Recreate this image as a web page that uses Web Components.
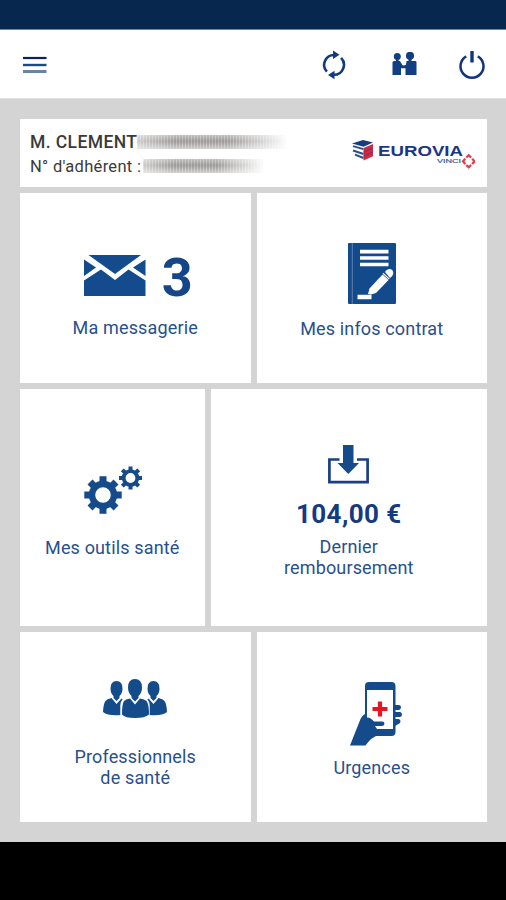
<!DOCTYPE html>
<html lang="fr">
<head>
<meta charset="utf-8">
<title>Espace adhérent</title>
<style>
html,body{margin:0;height:100%;background:#d4d4d4;font-family:Roboto,"Liberation Sans",sans-serif;color:#174080}
</style>
</head>
<body>
<health-app></health-app>
<script>
const define = (name, html) => customElements.define(name, class extends HTMLElement {
  constructor() {
    super();
    const t = document.createElement('template');
    t.innerHTML = html;
    this.attachShadow({mode: 'open'}).append(t.content.cloneNode(true));
  }
});

define('app-bar', `
<style>
:host{display:flex;align-items:center;height:69px;box-sizing:border-box;padding:2px 20px 0 23px;background:#fff;border-bottom:1px solid #e2e2e2}
svg{display:block;flex:none}
.space{flex:1}
.sync{margin-right:46px}.people{margin-right:41px}
</style>
<svg width="24" height="18" viewBox="0 0 24 18"><path d="M0 2h23.500" stroke="#0b1f66" stroke-width="2.200"/><path d="M0 9h23.500" stroke="#174a86" stroke-width="2.400"/><path d="M0 15.500h23.500" stroke="#6b82a8" stroke-width="3"/></svg>
<span class="space"></span>
<svg class="sync" width="24" height="30" viewBox="0 0 24 30"><g fill="none" stroke="#123a80" stroke-width="2.600"><path d="M4.900 21.700A9.900 9.900 0 0 1 12 5h2"/><path d="M19.100 7.900A9.900 9.900 0 0 1 12 24.700h-2"/></g><path d="M11 .5l6.500 4.200L11 9zM12.500 20.700L6 25l6.500 4.300z" fill="#123a80"/></svg>
<svg class="people" width="25" height="26" viewBox="0 0 25 26"><g fill="#123f82"><circle cx="5.300" cy="4.500" r="3.500"/><circle cx="18" cy="3.800" r="4.100"/><path d="M4 7h2.600v3H4zM16.500 7h3v4h-3zM.5 10.500q0-1.500 1.500-1.500h6l2.500 4.300 2.300.5v2.400H9V23H.5zM14.500 9h8.700q1.300 0 1.300 1.300V23H13.500v-6.700l-2-.2v-2.300l2.500-1z"/></g></svg>
<svg width="28" height="30" viewBox="0 0 28 30"><path d="M8.200 6.300a11.500 11.500 0 1 0 11.600 0" fill="none" stroke="#12347e" stroke-width="2.500"/><path d="M14 1v11.500" stroke="#12347e" stroke-width="3.400"/></svg>
`);

define('brand-logo', `
<style>:host{display:block}svg{display:block}</style>
<svg width="124" height="30" viewBox="0 0 124 30">
<path d="M1 4.500L12 1l10 2.500-9.500 4.200z" fill="#173b80"/>
<path d="M2 7.200l10.500 3M2 11.500l10.500 3.500M4 15.600l8.500 3.400" stroke="#2b4d8c" stroke-width="1.900"/>
<path d="M12.500 9L22 4.900v12.300l-9.500 4.300z" fill="#d3283f"/>
<path d="M12.500 13L22 9M12.500 17.200l9.500-4.300" stroke="#5a3568" stroke-width=".8"/>
<text x="27" y="17" textLength="85" lengthAdjust="spacingAndGlyphs" font-family="Liberation Sans,sans-serif" font-weight="700" font-size="14" fill="#1b3684">EUROVIA</text>
<text x="86" y="24" textLength="24" lengthAdjust="spacingAndGlyphs" font-family="Liberation Sans,sans-serif" font-size="5.500" fill="#4a5f96" stroke="#4a5f96" stroke-width=".2">VINCI</text>
<path d="M115.300 18.500l2.400-2.300 2.400 2.300M121.200 19.800l2.300 2.500-2.300 2.600M120.100 26l-2.400 2.300-2.400-2.300M114.300 24.900l-2.300-2.600 2.300-2.500" fill="none" stroke="#e23a47" stroke-width="2.200"/>
</svg>
`);

define('member-card', `
<style>
:host{display:flex;justify-content:space-between;box-sizing:border-box;height:68px;background:#fff;padding:11px 12px 0 10px;color:#3a3a3a}
.row{display:flex;align-items:center;height:24px;white-space:nowrap}
.name{font-size:17.500px;font-weight:500;letter-spacing:.4px}
.num{font-size:16.500px;letter-spacing:.3px}
.smear{height:14px;background:repeating-linear-gradient(90deg,rgba(255,255,255,.28) 0 1px,transparent 1px 3px),linear-gradient(180deg,rgba(120,117,115,.45),rgba(130,127,125,.8) 45%,rgba(150,148,146,.45));-webkit-mask:linear-gradient(90deg,rgba(0,0,0,.5),#000 25%,#000 60%,transparent);mask:linear-gradient(90deg,rgba(0,0,0,.5),#000 25%,#000 60%,transparent)}
.s1{width:151px}.s2{width:122px;margin-left:2px}
brand-logo{margin-top:9px}
</style>
<div>
<div class="row name"><slot name="name"></slot><span class="smear s1"></span></div>
<div class="row num"><slot name="number"></slot><span class="smear s2"></span></div>
</div>
<brand-logo></brand-logo>
`);

define('menu-tile', `
<style>
:host{display:flex;flex-direction:column;align-items:center;box-sizing:border-box;background:#fff;color:#28508c;padding-top:var(--top);min-width:0}
.head{display:flex;align-items:flex-start;height:var(--head)}
.label{font-size:18px;line-height:21px;text-align:center;letter-spacing:.15px;white-space:nowrap}
</style>
<div class="head"><slot name="icon"></slot></div>
<slot name="value"></slot>
<div class="label"><slot></slot></div>
`);

define('health-app', `
<style>
:host{display:flex;flex-direction:column;height:900px;width:506px;overflow:hidden;background:#d4d4d4}
.status{height:30px;background:#07274e;border-bottom:1px solid #77809f;box-sizing:border-box}
main{flex:1;display:flex;flex-direction:column;gap:6px;padding:20px 19px 0 20px}
.row{display:grid;gap:6px}
.r1{grid-template-columns:230.500px 1fr;height:190px}
.r2{grid-template-columns:184.500px 1fr;height:237px}
.r3{grid-template-columns:230.500px 1fr;height:190px}
.nav{height:58px;background:#000}
svg{display:block}
.count{font-size:54px;line-height:40px;font-weight:700;color:#154687;margin-left:16px;padding-top:4px;width:31px}
.amount{font-size:26px;line-height:30px;font-weight:700;color:#153a80;letter-spacing:.4px;margin-bottom:7px;white-space:nowrap}
.badge{display:flex;padding-left:6px}
</style>
<div class="status"></div>
<app-bar></app-bar>
<main>
<member-card><span slot="name">M. CLEMENT</span><span slot="number">N° d'adhérent :</span></member-card>
<div class="row r1">
<menu-tile style="--top:61px;--head:63px">
<div slot="icon" class="badge"><svg width="62" height="43" viewBox="0 0 62 43" fill="#144b8c"><path d="M4.500 1H57L31 20zM0 5.500L12 13.500 0 22zM61.500 5.500L49 13.500l12.500 8.500zM0 26.500L17 15.500l14 10.500 13.500-10.500 17 11V42H0z"/></svg><span class="count">3</span></div>
Ma messagerie</menu-tile>
<menu-tile style="--top:50px;--head:74.500px">
<svg slot="icon" width="48" height="61" viewBox="0 0 48 61"><rect width="48" height="61" rx="1" fill="#134a8c"/><path d="M4.300 0v61" stroke="#5b80b0" stroke-width="1"/><path d="M12 8.700h28.500M12 15h28.500M12 21.500h28.500" stroke="#fff" stroke-width="3.700"/><path d="M9.500 54h14" stroke="#fff" stroke-width="4.500"/><path d="M20 51l1.500-5.500L34.500 31.500l6 5.500L28 50l-5 1.500z" fill="#fff"/><path d="M37 29l1.500-1.700q3.500-2.500 6 .3 2 3-.8 5.800L42 35z" fill="#fff"/><path d="M35 30.300l6.300 5.800" stroke="#fff" stroke-width="1.200"/></svg>
Mes infos contrat</menu-tile>
</div>
<div class="row r2">
<menu-tile style="--top:77px;--head:71px">
<svg slot="icon" width="60" height="49" viewBox="-2 0 60 49" fill="none" stroke="#154a8b"><g transform="translate(19 29)"><circle r="11" stroke-width="6.400"/><g stroke-width="7"><path d="M0-12v-6.700M0 12v6.700M-12 0h-6.700M12 0h6.700"/><path d="M-9-9l-4-4M9 9l4 4M-9 9l-4 4M9-9l4-4"/></g></g><g transform="translate(46.500 12)"><circle r="6.800" stroke-width="3.800"/><g stroke-width="4"><path d="M0-7.500v-4M0 7.500v4M-7.500 0h-4M7.500 0h4"/><path d="M-5.500-5.500l-2.700-2.700M5.500 5.500l2.700 2.700M-5.500 5.500l-2.700 2.700M5.500-5.500l2.700-2.700"/></g></g></svg>
Mes outils santé</menu-tile>
<menu-tile style="--top:56px;--head:54px">
<svg slot="icon" width="41" height="39" viewBox="0 0 41 39"><path d="M11.500 14.500H1.400v22.600h38.200V14.500H29" fill="none" stroke="#1a3f84" stroke-width="2.700"/><path d="M15 0h10.500v18H31L20.300 29 9.500 18H15z" fill="#154a8b"/></svg>
<div slot="value" class="amount">104,00 €</div>
Dernier<br>remboursement</menu-tile>
</div>
<div class="row r3">
<menu-tile style="--top:47px;--head:67px">
<svg slot="icon" width="64" height="40" viewBox="0 0 64 40" fill="#144b8b"><path d="M13.500 2q6 0 6 7.500 0 5-3 7.500v2l-3 3-3-3v-2q-3-2.500-3-7.500Q7.500 2 13.500 2zM8.500 19l5 6 5-5.500 1 1q-2.200 2-2.200 6V36Q5 37 0 33q.3-8 2.500-11Q4 19.800 8.500 19z"/><path transform="matrix(-1 0 0 1 64 0)" d="M13.500 2q6 0 6 7.500 0 5-3 7.500v2l-3 3-3-3v-2q-3-2.500-3-7.500Q7.500 2 13.500 2zM8.500 19l5 6 5-5.500 1 1q-2.200 2-2.200 6V36Q5 37 0 33q.3-8 2.500-11Q4 19.800 8.500 19z"/><path d="M32 0q7 0 7 8.500 0 5.500-3.500 8.500v2L32 22.500 28.500 19v-2Q25 14 25 8.500 25 0 32 0z"/><path d="M27 19.500l5 6 5-6q4.500.8 6.500 2.500 2.500 3 2.500 13.500-4 3.500-14 3.500t-13-3.500q0-10.500 2-13.500 1.500-1.700 6-2.500z"/></svg>
Professionnels<br>de santé</menu-tile>
<menu-tile style="--top:50px;--head:75px">
<svg slot="icon" width="60" height="64" viewBox="-8 0 60 64"><g fill="#154b8b"><path d="M15 4q0-4 4-4h22.500q4 0 4 4v46q0 4-4 4H26l-5 3q-3 3-5.500 6.500H0L10.500 37q1.500-3.500 4.500-5z"/><path d="M45 23h4q2 .2 2 2.300T49 28h-4zM45 30h5q2 .2 2 2.500T50 35h-5zM45 37h3.500q2 .2 2 2.300T48.500 42l-3.500 2z"/></g><path d="M17 8h26v39H27l-2-3h7q2.500-.2 2.500-2.300T32 39.500H24q-4-4.500-7-4z" fill="#fff"/><path d="M30 19.500v15M22.500 27h15" stroke="#e91421" stroke-width="4.200"/></svg>
Urgences</menu-tile>
</div>
</main>
<div class="nav"></div>
`);
</script>
</body>
</html>
